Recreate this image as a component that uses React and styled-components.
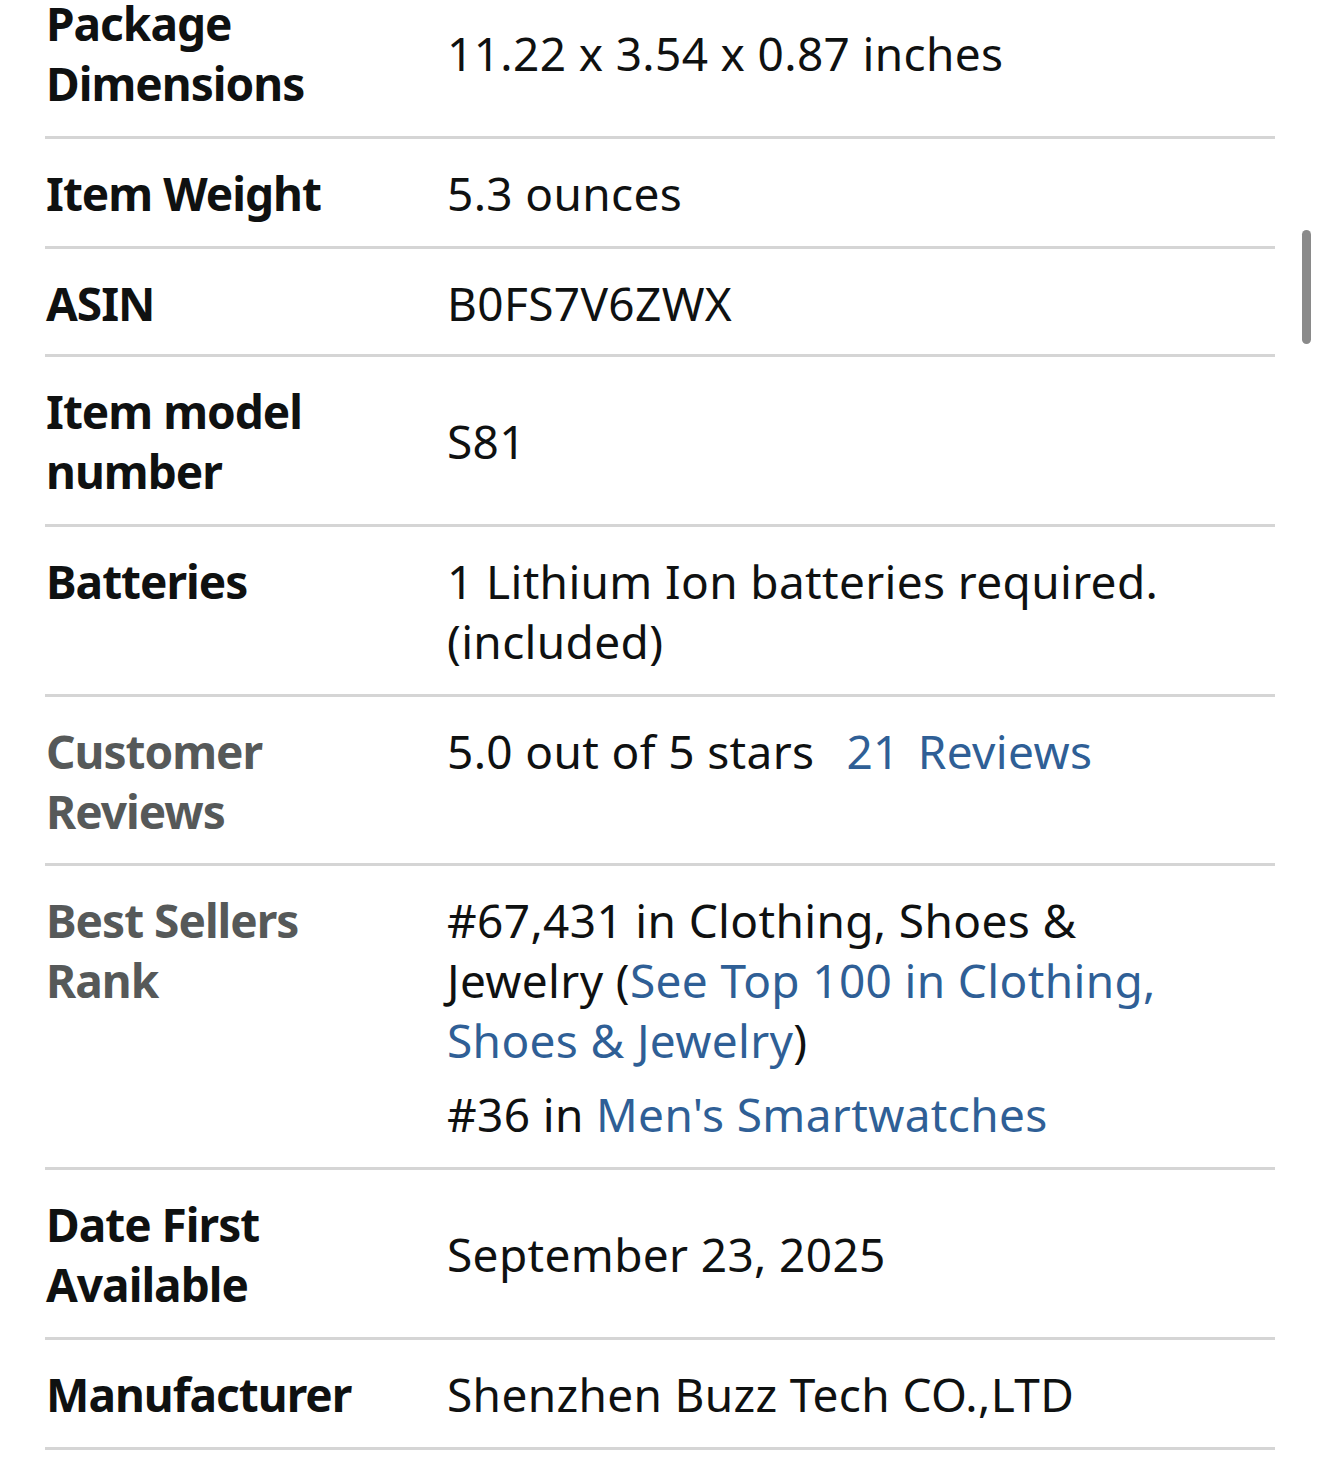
import styled, { createGlobalStyle } from 'styled-components';

const GlobalStyle = createGlobalStyle`
  *, *::before, *::after {
    box-sizing: border-box;
  }
  html, body {
    margin: 0;
    padding: 0;
    background: #fff;
  }
  body {
    font-family: "Noto Sans", "Open Sans", sans-serif;
    color: #0f1111;
    overflow: hidden;
  }
`;

const Page = styled.div`
  position: relative;
  height: 1463px;
  overflow: hidden;
  padding: 0 45px;
`;

const Table = styled.table`
  width: 1230px;
  border-collapse: collapse;
  margin-top: -31px;
  font-size: 46px;
  line-height: 60px;
`;

const Row = styled.tr`
  border-bottom: 3px solid #d5d5d5;
`;

const Label = styled.th`
  width: 402px;
  padding: 24px 0 ${(p) => 23 - (p.$trim || 0)}px 1px;
  text-align: left;
  vertical-align: top;
  font-weight: 700;
  letter-spacing: -1px;
  color: ${(p) => (p.$muted ? '#565959' : '#0f1111')};
`;

const Value = styled.td`
  padding: 24px 60px ${(p) => 23 - (p.$trim || 0)}px 0;
  vertical-align: ${(p) => (p.$top ? 'top' : 'middle')};
  font-weight: 400;
  letter-spacing: 0.35px;
`;

const Link = styled.a`
  color: #2f5f96;
  text-decoration: none;
  margin-left: ${(p) => p.$gap || 0}px;
`;

const RankList = styled.ul`
  list-style: none;
  margin: 0;
  padding: 0;
`;

const RankItem = styled.li`
  & + & {
    margin-top: 14px;
  }
`;

const ScrollThumb = styled.div`
  position: absolute;
  top: 230px;
  right: 9px;
  width: 9px;
  height: 114px;
  border-radius: 5px;
  background: #8a8a8a;
`;

const rows = [
  { label: ['Package', 'Dimensions'], value: '11.22 x 3.54 x 0.87 inches' },
  { label: ['Item Weight'], value: '5.3 ounces' },
  { label: ['ASIN'], value: 'B0FS7V6ZWX', trim: 2 },
  { label: ['Item model', 'number'], value: 'S81' },
  { label: ['Batteries'], value: <>1 Lithium Ion batteries required.<br />(included)</> },
];

const tailRows = [
  { label: ['Date First', 'Available'], value: 'September 23, 2025' },
  { label: ['Manufacturer'], value: 'Shenzhen Buzz Tech CO.,LTD' },
];

function LabelText({ lines }) {
  return lines.map((l, i) => (
    <span key={i}>
      {i > 0 && <br />}
      {l}
    </span>
  ));
}

export default function App() {
  return (
    <>
      <GlobalStyle />
      <Page>
        <Table>
          <tbody>
            {rows.map((r) => (
              <Row key={r.label.join(' ')}>
                <Label $trim={r.trim}><LabelText lines={r.label} /></Label>
                <Value $trim={r.trim} $top={r.label.length === 1}>{r.value}</Value>
              </Row>
            ))}
            <Row>
              <Label $muted $trim={1}>Customer<br />Reviews</Label>
              <Value $top $trim={1}>
                5.0 out of 5 stars
                <Link href="#" $gap={32}>21</Link>
                <Link href="#" $gap={18}>Reviews</Link>
              </Value>
            </Row>
            <Row>
              <Label $muted>Best Sellers<br />Rank</Label>
              <Value $top>
                <RankList>
                  <RankItem>
                    #67,431 in Clothing, Shoes &amp; Jewelry (<Link href="#">See Top 100 in Clothing, Shoes &amp; Jewelry</Link>)
                  </RankItem>
                  <RankItem>
                    #36 in <Link href="#">Men's Smartwatches</Link>
                  </RankItem>
                </RankList>
              </Value>
            </Row>
            {tailRows.map((r) => (
              <Row key={r.label.join(' ')}>
                <Label><LabelText lines={r.label} /></Label>
                <Value>{r.value}</Value>
              </Row>
            ))}
          </tbody>
        </Table>
        <ScrollThumb />
      </Page>
    </>
  );
}
